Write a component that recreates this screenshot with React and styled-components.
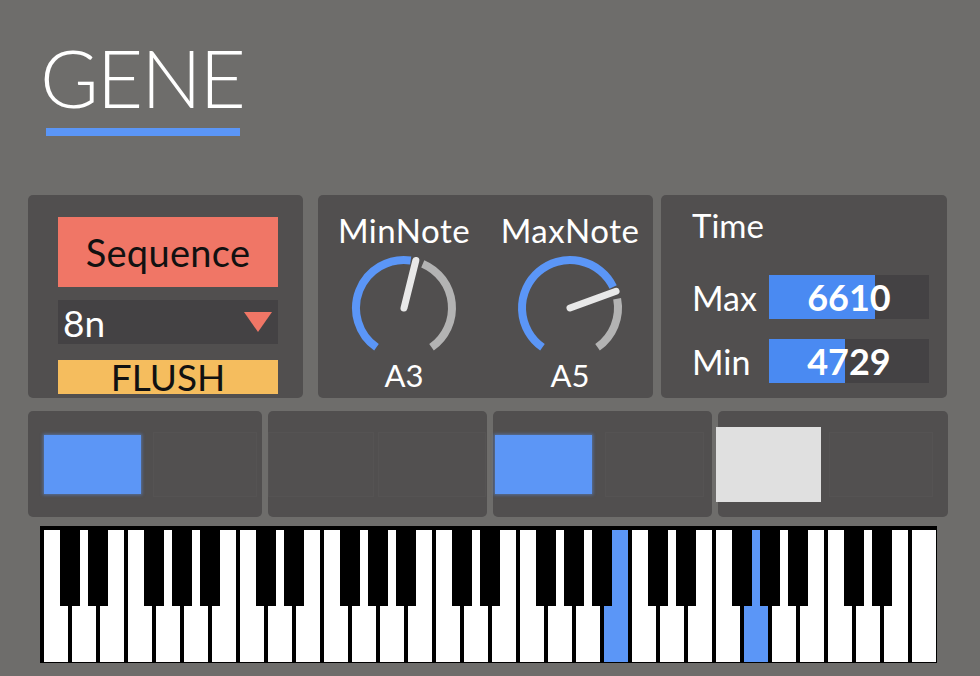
import React from 'react';
import styled, { createGlobalStyle } from 'styled-components';

const GlobalStyle = createGlobalStyle`
  html, body {
    margin: 0;
    padding: 0;
    background: #6e6d6b;
  }
  body {
    width: 980px;
    height: 676px;
    overflow: hidden;
    font-family: Lato, "Noto Sans", sans-serif;
    color: #ffffff;
  }
`;

// ----- knob geometry
const polar = (cx, cy, r, deg) => {
  const a = (deg * Math.PI) / 180;
  return [cx + r * Math.sin(a), cy - r * Math.cos(a)];
};

const arcPath = (cx, cy, r, from, to) => {
  const [x1, y1] = polar(cx, cy, r, from);
  const [x2, y2] = polar(cx, cy, r, to);
  const large = to - from > 180 ? 1 : 0;
  return `M ${x1} ${y1} A ${r} ${r} 0 ${large} 1 ${x2} ${y2}`;
};

const Knob = ({ angle }) => {
  const [nx, ny] = polar(56, 56, 49, angle);
  return (
    <KnobSvg width="112" height="104" viewBox="0 0 112 104">
      <path d={arcPath(56, 56, 48, -145, angle - 6)} stroke="#5b96f7" strokeWidth="8" fill="none" />
      <path d={arcPath(56, 56, 48, angle + 9, 145)} stroke="#b3b3b3" strokeWidth="8" fill="none" />
      <line x1="56" y1="56" x2={nx} y2={ny} stroke="#e8e8e8" strokeWidth="7" strokeLinecap="round" />
    </KnobSvg>
  );
};

// ----- keyboard data
const NOTES = 54;
const BLACK = [1, 3, 6, 8, 10];
const LIT = [35, 43];

const buildKeys = () => {
  const whites = [];
  const blacks = [];
  let wi = -1;
  for (let n = 0; n < NOTES; n++) {
    if (BLACK.includes(n % 12)) {
      blacks.push({ n, left: 4 + wi * 28 + 16 });
    } else {
      wi += 1;
      whites.push({ n });
    }
  }
  return { whites, blacks };
};

const STEPS = [
  [{ s: 'on', ml: 16 }, { s: 'off', ml: 12 }],
  [{ s: 'off', ml: 0, w: 106 }, { s: 'off', ml: 4, w: 108 }],
  [{ s: 'on', ml: 2 }, { s: 'off', ml: 13, w: 99 }],
  [{ s: 'active', ml: -2 }, { s: 'off', ml: 8 }],
];
const STEP_WIDTHS = [234, 219, 219, 230];

const App = () => {
  const { whites, blacks } = buildKeys();

  return (
    <React.Fragment>
      <GlobalStyle />
      <Page>
        <Header>
          <Title>GENE</Title>
          <Underline />
        </Header>

        <TopRow>
          <Panel $w={275} $mr={7}>
            <Controls>
              <SeqButton>Sequence</SeqButton>
              <Select>
                <span>8n</span>
                <Arrow />
              </Select>
              <FlushButton>FLUSH</FlushButton>
            </Controls>
          </Panel>

          <Panel $w={335}>
            <Knobs>
              <KnobCol>
                <KnobLabel>MinNote</KnobLabel>
                <Knob angle={14} />
                <KnobValue>A3</KnobValue>
              </KnobCol>
              <KnobCol>
                <KnobLabel>MaxNote</KnobLabel>
                <Knob angle={70} />
                <KnobValue>A5</KnobValue>
              </KnobCol>
            </Knobs>
          </Panel>

          <Panel $w={286}>
            <TimeBox>
              <TimeTitle>Time</TimeTitle>
              <TimeRow>
                <TimeLabel>Max</TimeLabel>
                <NumBox>
                  <NumFill style={{ width: '66.1%' }} />
                  <NumText>6610</NumText>
                </NumBox>
              </TimeRow>
              <TimeRow>
                <TimeLabel>Min</TimeLabel>
                <NumBox>
                  <NumFill style={{ width: '47.29%' }} />
                  <NumText>4729</NumText>
                </NumBox>
              </TimeRow>
            </TimeBox>
          </Panel>
        </TopRow>

        <StepRow>
          {STEPS.map((pair, i) => (
            <StepPanel key={i} $w={STEP_WIDTHS[i]}>
              {pair.map((c, j) => (
                <Step key={j} $state={c.s} $ml={c.ml} $w={c.w} />
              ))}
            </StepPanel>
          ))}
        </StepRow>

        <Keyboard>
          {whites.map((k) => (
            <WhiteKey key={k.n} $lit={LIT.includes(k.n)} />
          ))}
          {blacks.map((k) => (
            <BlackKey key={k.n} style={{ left: k.left }} />
          ))}
        </Keyboard>
      </Page>
    </React.Fragment>
  );
};

export default App;

const Page = styled.div`
  display: flex;
  flex-direction: column;
  padding-left: 28px;
`;

const Header = styled.div`
  display: flex;
  flex-direction: column;
  align-items: flex-start;
  padding-left: 12px;
`;

const Title = styled.h1`
  margin: 37px 0 0 0;
  font-family: Lato, sans-serif;
  font-weight: 300;
  font-size: 80px;
  line-height: 80px;
  color: #ffffff;
  letter-spacing: -2px;
`;

const Underline = styled.div`
  width: 194px;
  height: 8px;
  margin: 11px 0 0 6px;
  background: #5b96f7;
`;

const TopRow = styled.div`
  display: flex;
  gap: 8px;
  margin-top: 59px;
`;

const Panel = styled.div`
  width: ${(p) => p.$w}px;
  height: 203px;
  margin-right: ${(p) => p.$mr || 0}px;
  background: #514f4f;
  border-radius: 5px;
  box-sizing: border-box;
`;

const Controls = styled.div`
  display: flex;
  flex-direction: column;
  padding: 22px 0 0 30px;
  width: 220px;
`;

const SeqButton = styled.div`
  height: 70px;
  display: flex;
  align-items: center;
  justify-content: center;
  background: #f07666;
  color: #111;
  font-size: 38px;
  letter-spacing: 0.3px;
`;

const Select = styled.div`
  height: 44px;
  margin-top: 13px;
  display: flex;
  align-items: center;
  justify-content: space-between;
  padding: 0 6px 0 5px;
  background: #444244;
  font-size: 37px;
  color: #fff;
`;

const Arrow = styled.div`
  width: 0;
  height: 0;
  border-left: 14px solid transparent;
  border-right: 14px solid transparent;
  border-top: 20px solid #f07666;
`;

const FlushButton = styled.div`
  height: 34px;
  margin-top: 16px;
  display: flex;
  align-items: center;
  justify-content: center;
  background: #f5bd5e;
  color: #111;
  font-size: 37px;
  line-height: 34px;
  overflow: visible;
`;

const Knobs = styled.div`
  display: flex;
  gap: 36px;
  padding: 17px 0 0 21px;
`;

const KnobCol = styled.div`
  width: 130px;
  display: flex;
  flex-direction: column;
  align-items: center;
`;

const KnobLabel = styled.div`
  font-size: 33px;
  line-height: 36px;
  letter-spacing: 0.5px;
  white-space: nowrap;
`;

const KnobSvg = styled.svg`
  display: block;
  margin-top: 4px;
`;

const KnobValue = styled.div`
  font-size: 31px;
  line-height: 36px;
  margin-top: 1px;
`;

const TimeBox = styled.div`
  display: flex;
  flex-direction: column;
  padding: 10px 0 0 31px;
`;

const TimeTitle = styled.div`
  font-size: 33px;
  line-height: 40px;
`;

const TimeRow = styled.div`
  display: flex;
  align-items: center;
  height: 44px;
  margin-top: 30px;

  & + & {
    margin-top: 20px;
  }
`;

const TimeLabel = styled.div`
  width: 77px;
  font-size: 34px;
`;

const NumBox = styled.div`
  position: relative;
  width: 160px;
  height: 44px;
  background: #444244;
  display: flex;
  align-items: center;
  justify-content: center;
`;

const NumFill = styled.div`
  position: absolute;
  left: 0;
  top: 0;
  bottom: 0;
  background: #4a8af2;
`;

const NumText = styled.span`
  position: relative;
  font-size: 36px;
  font-weight: 700;
  color: #fff;
`;

const StepRow = styled.div`
  display: flex;
  gap: 6px;
  margin-top: 13px;
`;

const StepPanel = styled.div`
  width: ${(p) => p.$w}px;
  height: 106px;
  display: flex;
  align-items: center;
  background: #514f4f;
  border-radius: 5px;
`;

const Step = styled.div`
  flex: none;
  margin-left: ${(p) => p.$ml}px;
  width: ${(p) => (p.$w ? p.$w : p.$state === 'on' ? 97 : p.$state === 'active' ? 105 : 104)}px;
  height: ${(p) => (p.$state === 'on' ? 59 : p.$state === 'active' ? 75 : 65)}px;
  background: ${(p) => (p.$state === 'on' ? '#5c96f6' : p.$state === 'active' ? '#e0e0e0' : '#525050')};
  box-shadow: ${(p) =>
    p.$state === 'on'
      ? '0 0 3px 1px rgba(92,150,246,0.5)'
      : p.$state === 'off'
      ? 'inset 0 0 0 1px rgba(255,255,255,0.02)'
      : 'none'};
`;

const Keyboard = styled.div`
  position: relative;
  display: flex;
  gap: 4px;
  width: 892px;
  margin: 9px 0 0 12px;
  padding: 4px 1px 1px 4px;
  background: #000;
`;

const WhiteKey = styled.div`
  width: 24px;
  height: 132px;
  background: ${(p) => (p.$lit ? '#5b96f7' : '#ffffff')};
`;

const BlackKey = styled.div`
  position: absolute;
  top: 4px;
  width: 20px;
  height: 76px;
  background: #000;
`;
